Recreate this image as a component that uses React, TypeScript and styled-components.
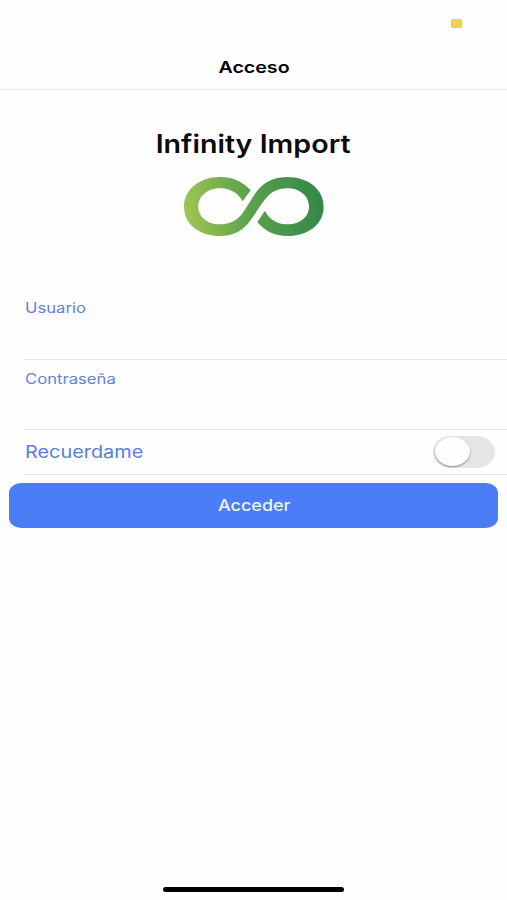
import React from "react";
import styled, { createGlobalStyle } from "styled-components";

const GlobalStyle = createGlobalStyle`
  * { box-sizing: border-box; }
  body { margin: 0; background: #fefefe; font-family: Inter, "Liberation Sans", sans-serif; }
`;

const Screen = styled.main`
  display: flex;
  flex-direction: column;
  width: 507px;
  height: 900px;
  overflow: hidden;
  background: #fefefe;
`;

const StatusBar = styled.div`
  display: flex;
  justify-content: flex-end;
  height: 46px;
  padding: 19px 45px 0 0;
`;

const Indicator = styled.span`
  width: 11px;
  height: 9px;
  border-radius: 1px;
  background: #edd44f;
`;

const NavBar = styled.header`
  display: flex;
  justify-content: center;
  height: 44px;
  padding: 9px 0 0 1px;
  border-bottom: 1px solid #ebebeb;
`;

const Label = styled.span<{ $size: number; $stretch: number; $weight?: number; $origin?: string }>`
  display: block;
  height: 24px;
  line-height: 24px;
  white-space: nowrap;
  font-size: ${(p) => p.$size}px;
  font-weight: ${(p) => p.$weight ?? 400};
  transform: scaleX(${(p) => p.$stretch});
  transform-origin: ${(p) => p.$origin ?? "center"};
`;

const Brand = styled.section`
  display: flex;
  flex-direction: column;
  align-items: center;
  height: 199px;
  padding-top: 42px;
`;

const Heading = styled.h1`
  margin: 0 0 9px;
  color: #0c0c0c;
`;

const Logo = styled.svg`
  display: block;
  width: 170px;
  height: 85px;
  margin-left: 2px;
`;

const Form = styled.form`
  display: flex;
  flex-direction: column;
`;

const Field = styled.label<{ $height: number }>`
  display: flex;
  align-items: flex-start;
  height: ${(p) => p.$height}px;
  margin-left: 24px;
  padding: 7px 0 0 1px;
  border-bottom: 1px solid #e6e6e8;
  color: #6183da;
`;

const ToggleRow = styled(Field)`
  align-items: center;
  justify-content: space-between;
  padding: 0 12px 0 1px;
  color: #5680dc;
`;

const Track = styled.span`
  display: flex;
  width: 62px;
  height: 32px;
  padding: 1px 2px;
  border-radius: 18px / 16px;
  background: #e5e5e5;
`;

const Thumb = styled.span`
  width: 35px;
  height: 29px;
  border-radius: 50%;
  background: #fefefe;
  box-shadow: 0 1px 2px rgba(0, 0, 0, 0.4);
`;

const Submit = styled.button`
  display: flex;
  align-items: center;
  justify-content: center;
  height: 45px;
  margin: 8px 9px 0 9px;
  padding: 1px 0 0 1px;
  border: 0;
  border-radius: 12px / 10px;
  background: #4a7df6;
  color: #eef4ff;
  font-family: inherit;
`;

const HomeIndicator = styled.div`
  width: 181px;
  height: 5px;
  margin: auto auto 8px 163px;
  border-radius: 3px;
  background: #000;
`;

export default function App() {
  return (
    <>
      <GlobalStyle />
      <Screen>
        <StatusBar><Indicator /></StatusBar>
        <NavBar><Label $size={16} $stretch={1.225} $weight={600}>Acceso</Label></NavBar>
        <Brand>
          <Heading><Label as="span" $size={25} $stretch={1.145} $weight={600}>Infinity Import</Label></Heading>
          <Logo viewBox="0 0 510 255" role="img" aria-label="Infinity">
            <defs>
              <linearGradient id="leaf" gradientUnits="userSpaceOnUse" x1="42" y1="140" x2="450" y2="90">
                <stop offset="0" stopColor="#9fc653" />
                <stop offset="0.5" stopColor="#58a04e" />
                <stop offset="1" stopColor="#358849" />
              </linearGradient>
            </defs>
            <path
              fill="url(#leaf)"
              d="M242 76C218 49 187 36 150 36C88 36 42 74 42 125C42 177 88 213 150 213C185 213 212 201 233 177C254 153 270 118 292 95C307 79 327 70 352 70C389 70 417 93 417 125C417 156 389 178 352 178C322 178 297 163 285 137L262 171C284 199 315 213 352 213C415 213 461 177 461 125C461 73 415 36 352 36C318 36 290 47 268 70C246 94 230 132 207 157C192 171 174 178 150 178C113 178 85 156 85 125C85 93 113 70 150 70C181 70 205 84 218 109Z"
            />
          </Logo>
        </Brand>
        <Form>
          <Field $height={71}><Label $size={14} $stretch={1.19} $origin="left">Usuario</Label></Field>
          <Field $height={70}><Label $size={14} $stretch={1.19} $origin="left">Contraseña</Label></Field>
          <ToggleRow as="div" $height={45}>
            <Label $size={17.3} $stretch={1.15} $origin="left">Recuerdame</Label>
            <Track role="switch" aria-checked="false"><Thumb /></Track>
          </ToggleRow>
          <Submit type="button"><Label $size={15.5} $stretch={1.16} $weight={500}>Acceder</Label></Submit>
        </Form>
        <HomeIndicator />
      </Screen>
    </>
  );
}
